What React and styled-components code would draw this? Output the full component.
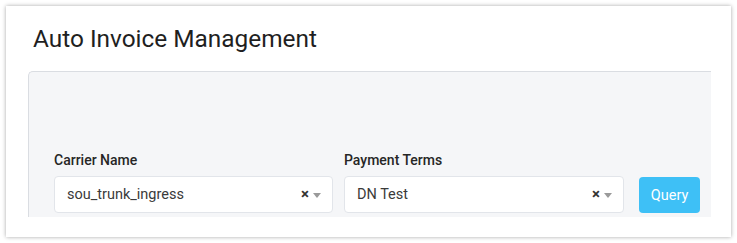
import React from "react";
import styled, { createGlobalStyle } from "styled-components";

const Global = createGlobalStyle`
  html, body { margin: 0; padding: 0; background: #ffffff; }
  body { font-family: Roboto, "Liberation Sans", Arial, sans-serif; }
`;

const Page = styled.div`
  padding: 6px;
  width: 737px;
  height: 243px;
  box-sizing: border-box;
`;

const Card = styled.div`
  width: 725px;
  height: 231px;
  box-sizing: border-box;
  background: #fff;
  box-shadow: 0 0 4px rgba(0, 0, 0, 0.35);
  padding: 17px 20px 20px 22px;
  display: flex;
  flex-direction: column;
`;

const Title = styled.h1`
  margin: 0 0 0 5px;
  font-size: 24.4px;
  font-weight: 400;
  line-height: 32px;
  color: #1f1f1f;
  height: 48px;
`;

const Body = styled.div`
  flex: 1;
  overflow: hidden;
`;

const Panel = styled.div`
  background: #f5f6f8;
  border-top: 1px solid #dadde2;
  border-left: 1px solid #dadde2;
  border-top-left-radius: 5px;
  padding: 80px 0 12px 25px;
  display: flex;
  align-items: flex-end;
  gap: 11px;
`;

const Field = styled.div`
  display: flex;
  flex-direction: column;
  width: ${(p) => p.$w}px;
`;

const Label = styled.label`
  font-size: 14px;
  font-weight: 500;
  color: #262626;
  line-height: 16px;
  margin-bottom: 8px;
`;

const Select = styled.div`
  height: 37px;
  box-sizing: border-box;
  background: #fff;
  border: 1px solid #e2e5ea;
  border-radius: 4px;
  display: flex;
  align-items: center;
  padding: 0 11px 0 12px;
  font-size: 14.5px;
  color: #3a3a3a;
`;

const Value = styled.span`
  flex: 1;
`;

const Clear = styled.span`
  font-size: 15px;
  font-weight: 700;
  color: #333;
  margin-right: 4px;
  line-height: 1;
`;

const Arrow = styled.span`
  width: 0;
  height: 0;
  border-left: 4px solid transparent;
  border-right: 4px solid transparent;
  border-top: 5px solid #9a9a9a;
  margin-top: 1px;
`;

const Button = styled.button`
  margin-left: 4px;
  width: 61px;
  height: 36px;
  border: none;
  border-radius: 4px;
  background: #3ec0f6;
  color: #fff;
  font-family: inherit;
  font-size: 14.5px;
  padding: 0;
  margin-bottom: 0;
`;

function SelectBox({ value }) {
  return (
    <Select>
      <Value>{value}</Value>
      <Clear>×</Clear>
      <Arrow />
    </Select>
  );
}

export default function App() {
  return (
    <>
      <Global />
      <Page>
        <Card>
          <Title>Auto Invoice Management</Title>
          <Body>
            <Panel>
              <Field $w={279}>
                <Label>Carrier Name</Label>
                <SelectBox value="sou_trunk_ingress" />
              </Field>
              <Field $w={280}>
                <Label>Payment Terms</Label>
                <SelectBox value="DN Test" />
              </Field>
              <Button>Query</Button>
            </Panel>
          </Body>
        </Card>
      </Page>
    </>
  );
}
